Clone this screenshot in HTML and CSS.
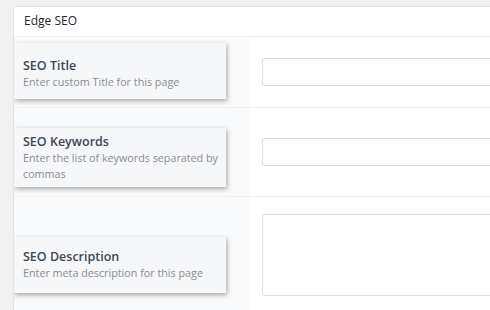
FILE: index.html
```html
<!DOCTYPE html>
<html>
<head>
<meta charset="utf-8">
<link rel="stylesheet" href="styles.css">
</head>
<body>
<div class="panel">
  <div class="panel-head">Edge SEO</div>
  <div class="row row-1">
    <div class="label-cell">
      <div class="card">
        <div class="card-title">SEO Title</div>
        <div class="card-desc">Enter custom Title for this page</div>
      </div>
    </div>
    <div class="field-cell">
      <input class="text-input" type="text">
    </div>
  </div>
  <div class="row row-2">
    <div class="label-cell">
      <div class="card">
        <div class="card-title">SEO Keywords</div>
        <div class="card-desc">Enter the list of keywords separated by commas</div>
      </div>
    </div>
    <div class="field-cell">
      <input class="text-input" type="text">
    </div>
  </div>
  <div class="row row-3">
    <div class="label-cell">
      <div class="card">
        <div class="card-title">SEO Description</div>
        <div class="card-desc">Enter meta description for this page</div>
      </div>
    </div>
    <div class="field-cell">
      <textarea class="text-area"></textarea>
    </div>
  </div>
</div>
</body>
</html>
```

FILE: styles.css
```css
html, body {
  margin: 0;
  padding: 0;
  background: #f1f1f1;
  overflow: hidden;
  font-family: "Open Sans", "Noto Sans", sans-serif;
}
.panel {
  margin: 6px 0 0 13px;
  width: 477px;
  background: #fff;
  border: 1px solid #e3e3e3;
  border-right: none;
}
.panel-head {
  height: 29px;
  line-height: 28px;
  padding-left: 10px;
  font-size: 12px;
  color: #23282d;
  border-bottom: 1px solid #eeeeee;
}
.row {
  display: grid;
  grid-template-columns: 236px 1fr;
  border-bottom: 1px solid #f0f0f0;
  overflow: hidden;
}
.label-cell {
  background: #f9fafb;
}
.row-1 { height: 70px; }
.row-1 .label-cell { padding-top: 6px; }
.row-1 .field-cell { padding-top: 21px; }
.row-1 .card { padding: 14px 4px 9px 9px; }
.row-2 { height: 88px; }
.row-2 .label-cell { padding-top: 20px; }
.row-2 .field-cell { padding-top: 30px; }
.row-2 .card { padding: 5px 4px 5px 9px; }
.row-3 { height: 120px; }
.row-3 .label-cell { padding-top: 40px; }
.row-3 .field-cell { padding-top: 17px; }
.row-3 .card { padding: 11px 4px 12px 9px; }
.card {
  width: 212px;
  box-sizing: border-box;
  background: #f6f7f9;
  box-shadow: 1px 2px 5px rgba(0, 0, 0, 0.35);
}
.card-title {
  font-size: 12.5px;
  font-weight: 600;
  color: #3f4655;
  line-height: 17px;
}
.card-desc {
  font-size: 10.75px;
  color: #8a8d92;
  line-height: 16px;
}
.field-cell {
  padding-left: 12px;
}
.text-input {
  display: block;
  box-sizing: border-box;
  width: 300px;
  height: 28px;
  border: 1px solid #dddddd;
  border-radius: 3px;
  background: #fff;
  margin: 0;
}
.text-area {
  display: block;
  box-sizing: border-box;
  width: 300px;
  height: 82px;
  border: 1px solid #dddddd;
  border-radius: 3px;
  background: #fff;
  margin: 0;
  resize: none;
}
```
